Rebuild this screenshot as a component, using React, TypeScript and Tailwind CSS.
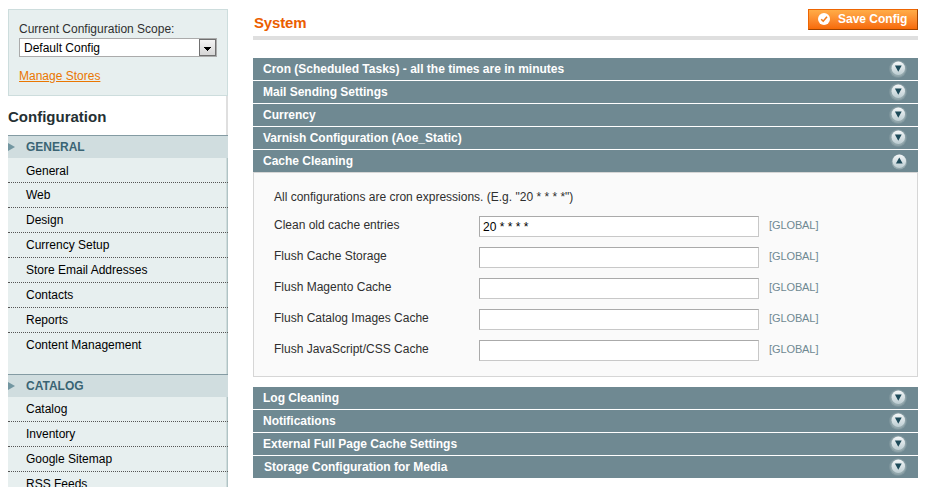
import React from "react";

const general = [
  "General",
  "Web",
  "Design",
  "Currency Setup",
  "Store Email Addresses",
  "Contacts",
  "Reports",
  "Content Management",
];

const catalog = ["Catalog", "Inventory", "Google Sitemap", "RSS Feeds"];

const fields: [string, string][] = [
  ["Clean old cache entries", "20 * * * *"],
  ["Flush Cache Storage", ""],
  ["Flush Magento Cache", ""],
  ["Flush Catalog Images Cache", ""],
  ["Flush JavaScript/CSS Cache", ""],
];

function Toggle({ open }: { open?: boolean }) {
  return (
    <svg width="20" height="20" viewBox="0 0 20 20">
      <defs>
        <linearGradient id="knob" x1="0" y1="0" x2="0" y2="1">
          <stop offset="0" stopColor="#f4f7f8" />
          <stop offset="1" stopColor="#bccdd2" />
        </linearGradient>
      </defs>
      {open ? (
        <>
          <circle cx="11.3" cy="11" r="7.6" fill="#93a8ad" />
          <circle cx="11.3" cy="10.2" r="6.7" fill="url(#knob)" />
          <path d="M11.3 6.6 L14.7 12.4 H7.9 Z" fill="#1d4a59" />
        </>
      ) : (
        <>
          <circle cx="10" cy="10" r="8.8" fill="#81989f" />
          <circle cx="10.1" cy="10" r="7.7" fill="#93a8ad" />
          <circle cx="10.3" cy="9.2" r="6.7" fill="url(#knob)" />
          <path d="M10.3 12.8 L13.7 6.6 H6.9 Z" fill="#1d4a59" />
        </>
      )}
    </svg>
  );
}

function Bar({ title, open, indent = "pl-[10px]" }: { title: string; open?: boolean; indent?: string }) {
  return (
    <div className={`flex h-[22px] items-center justify-between bg-[#6f8992] pr-[10px] ${indent}`}>
      <span className="text-[12px] font-bold leading-[22px] text-white">{title}</span>
      <Toggle open={open} />
    </div>
  );
}

function Section({ title, items, first }: { title: string; items: string[]; first: string }) {
  return (
    <div>
      <div className="flex h-[23px] items-center border-t border-[#849ba3] bg-[#d0dddf]">
        <svg width="7" height="8" viewBox="0 0 7 8">
          <path d="M0 0 L7 4 L0 8 Z" fill="#7296a1" />
        </svg>
        <span className="ml-[11px] text-[12px] font-bold leading-[22px] text-[#3a6474]">{title}</span>
      </div>
      <ul className="border-r border-[#b0c3c5] shadow-[inset_-1px_0_0_#cfdcdc]">
        {items.map((name, i) => (
          <li
            key={name}
            className={`-mr-px pl-[18px] text-[12px] text-black ${i === 0 ? first : "leading-[24px]"} ${
              i === items.length - 1 ? "h-[41px]" : "h-[25px] border-b border-dotted border-[#555]"
            }`}
          >
            {name}
          </li>
        ))}
      </ul>
    </div>
  );
}

export default function App() {
  return (
    <div className="flex h-[487px] w-[928px] overflow-hidden bg-white font-['Liberation_Sans',Arial,sans-serif] text-[12px] text-[#2f2f2f]">
      <aside className="ml-2 mt-[9px] w-[220px] shrink-0">
        <div className="h-[87px] border border-[#cddddd] bg-[#e7efef] px-[10px] pt-[11px]">
          <div className="h-[17px] leading-4">Current Configuration Scope:</div>
          <div className="flex h-[19px] w-[198px] border border-[#ababab] bg-white text-black">
            <span className="flex-1 pl-1 leading-[18px]">Default Config</span>
            <span className="flex w-[17px] items-center justify-center border border-[#707070] bg-gradient-to-b from-[#f4f4f4] to-[#d6d6d6]">
              <svg width="7" height="4" viewBox="0 0 7 4" className="mt-0.5" shapeRendering="crispEdges">
                <path d="M0 0 H7 V1 H6 V2 H5 V3 H4 V4 H3 V3 H2 V2 H1 V1 H0 Z" fill="#000" />
              </svg>
            </span>
          </div>
          <div className="mt-[11px] leading-[16px] text-[#ea7601] underline">Manage Stores</div>
        </div>
        <h3 className="h-[39px] border-r-2 border-[#dfdfdf] pt-[12px] text-[15px] font-bold leading-[18px] text-[#253033]">
          Configuration
        </h3>
        <div className="bg-[#e7efef]">
          <Section title="GENERAL" items={general} first="leading-[26px]" />
          <Section title="CATALOG" items={catalog} first="leading-[24px]" />
        </div>
      </aside>

      <main className="ml-[25px] w-[665px] shrink-0">
        <div className="flex h-10 items-start justify-between border-b-4 border-[#dfdfdf]">
          <h3 className="ml-px mt-[14px] text-[15px] font-bold leading-[18px] tracking-[-0.15px] text-[#eb5e00]">
            System
          </h3>
          <button className="mt-[9px] flex h-[21px] w-[110px] items-center border border-t-[#ed6502] border-r-[#a04300] border-b-[#a04300] border-l-[#ed6502] bg-gradient-to-b from-[#ffac47] to-[#f76a05] pl-[9px] text-[12px] font-bold leading-[19px] text-white">
            <svg width="12" height="12" viewBox="0 0 12 12" className="-mt-px">
              <circle cx="6" cy="6" r="6" fill="#fff" />
              <path d="M3.2 6.2 L5.2 8.2 L9 3.8" fill="none" stroke="#f07a1a" strokeWidth="1.6" />
            </svg>
            <span className="ml-2">Save Config</span>
          </button>
        </div>

        <div className="mt-[18px] flex flex-col gap-px">
          <Bar title="Cron (Scheduled Tasks) - all the times are in minutes" />
          <Bar title="Mail Sending Settings" />
          <Bar title="Currency" />
          <Bar title="Varnish Configuration (Aoe_Static)" />
          <Bar title="Cache Cleaning" open />
        </div>
        <div className="h-[205px] border border-[#d6d6d6] bg-[#fafafa] pl-5 pt-4">
          <p className="h-[27px] leading-[16px]">
            All configurations are cron expressions. (E.g. "20 * * * *")
          </p>
          {fields.map(([label, value]) => (
            <div key={label} className="flex h-[31px]">
              <label className="w-[205px] leading-[19px]">{label}</label>
              <input
                readOnly
                value={value}
                className="h-[21px] w-[280px] border border-t-[#aaa] border-r-[#c8c8c8] border-b-[#c8c8c8] border-l-[#aaa] bg-white px-[3px] text-[12px] text-black"
              />
              <span className="ml-[10px] text-[11px] leading-[18px] tracking-[-0.1px] text-[#6f8992]">[GLOBAL]</span>
            </div>
          ))}
        </div>
        <div className="mt-[10px] flex flex-col gap-px">
          <Bar title="Log Cleaning" />
          <Bar title="Notifications" />
          <Bar title="External Full Page Cache Settings" />
          <Bar title="Storage Configuration for Media" indent="pl-[11px]" />
        </div>
      </main>
    </div>
  );
}
